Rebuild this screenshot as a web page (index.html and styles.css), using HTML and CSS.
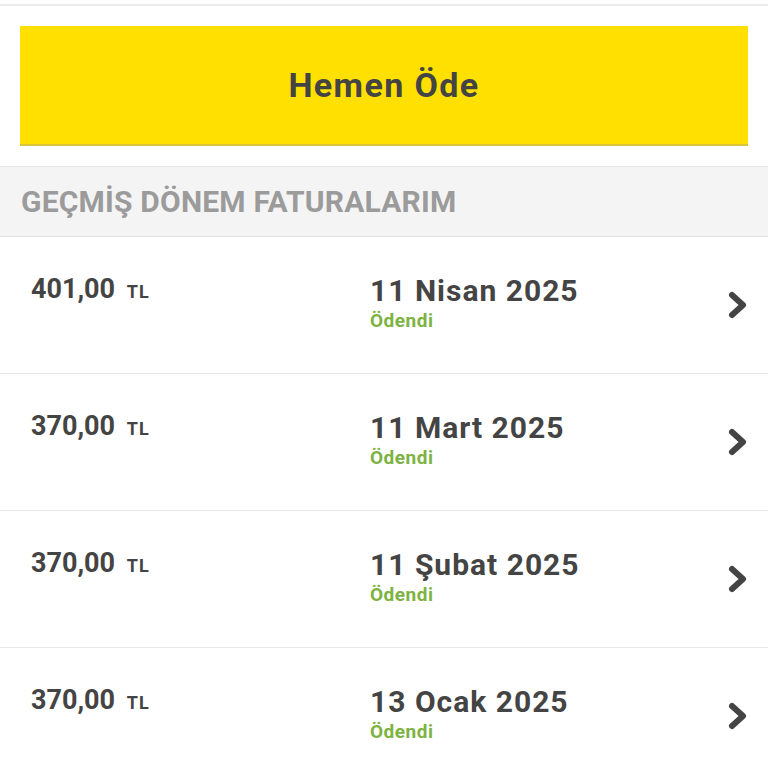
FILE: index.html
```html
<!DOCTYPE html>
<html lang="tr">

<head>
  <meta charset="UTF-8">
  <meta name="viewport" content="width=device-width, initial-scale=1.0">
  <title>Faturalarım</title>
  <link rel="stylesheet" href="styles.css">
</head>

<body>

  <div class="topline"></div>

  <button class="pay-btn">Hemen Öde</button>

  <div class="section-title">GEÇMİŞ DÖNEM FATURALARIM</div>

  <!-- past invoices -->
  <ul class="invoices">
    <li class="invoice">
      <div class="amount">401,00 <span class="cur">TL</span></div>
      <div class="info">
        <div class="date">11 Nisan 2025</div>
        <div class="status">Ödendi</div>
      </div>
      <svg class="chevron" viewBox="0 0 22 30"><polyline points="5,5 16,15 5,25" /></svg>
    </li>
    <li class="invoice">
      <div class="amount">370,00 <span class="cur">TL</span></div>
      <div class="info">
        <div class="date">11 Mart 2025</div>
        <div class="status">Ödendi</div>
      </div>
      <svg class="chevron" viewBox="0 0 22 30"><polyline points="5,5 16,15 5,25" /></svg>
    </li>
    <li class="invoice">
      <div class="amount">370,00 <span class="cur">TL</span></div>
      <div class="info">
        <div class="date">11 Şubat 2025</div>
        <div class="status">Ödendi</div>
      </div>
      <svg class="chevron" viewBox="0 0 22 30"><polyline points="5,5 16,15 5,25" /></svg>
    </li>
    <li class="invoice">
      <div class="amount">370,00 <span class="cur">TL</span></div>
      <div class="info">
        <div class="date">13 Ocak 2025</div>
        <div class="status">Ödendi</div>
      </div>
      <svg class="chevron" viewBox="0 0 22 30"><polyline points="5,5 16,15 5,25" /></svg>
    </li>
  </ul>

</body>

</html>
```

FILE: styles.css
```css
body {
  margin: 0;
  font-family: Roboto, "Noto Sans", sans-serif;
  background-color: white;
  color: #444444;
}

.topline {
  height: 4px;
  border-bottom: 2px solid #ececec;
}

.pay-btn {
  display: block;
  width: 728px;
  height: 120px;
  margin: 20px 20px 0;
  padding: 0;
  font-family: inherit;
  font-size: 34px;
  font-weight: 700;
  color: #444444;
  background-color: #ffe000;
  border: none;
  border-bottom: 2px solid #d9c43a;
  letter-spacing: 1.4px;
}

.section-title {
  margin-top: 20px;
  height: 69px;
  line-height: 69px;
  padding-left: 21px;
  font-size: 30px;
  font-weight: 700;
  color: #9b9b9b;
  background-color: #f4f4f4;
  border-top: 1px solid #e6e6e6;
  border-bottom: 1px solid #e2e2e2;
  letter-spacing: 0.2px;
}

.invoices {
  list-style: none;
  margin: 0;
  padding: 0;
}

.invoice {
  display: flex;
  align-items: center;
  height: 136px;
  border-bottom: 1px solid #e8e8e8;
  padding: 0 19px 0 31px;
}

.amount {
  width: 339px;
  align-self: flex-start;
  margin-top: 36px;
  font-size: 27px;
  font-weight: 700;
}

.cur {
  margin-left: 5px;
  font-size: 18px;
  letter-spacing: 1px;
}

.info {
  flex: 1;
  align-self: flex-start;
  margin-top: 35px;
}

.date {
  font-size: 30px;
  font-weight: 700;
  line-height: 38px;
  letter-spacing: 1px;
}

.status {
  font-size: 19px;
  font-weight: 700;
  color: #7cb342;
  line-height: 22px;
  letter-spacing: 0.5px;
}

.chevron {
  width: 22px;
  height: 30px;
  fill: none;
  stroke: #444444;
  stroke-width: 6;
  stroke-linejoin: round;
  stroke-linecap: round;
}
```
